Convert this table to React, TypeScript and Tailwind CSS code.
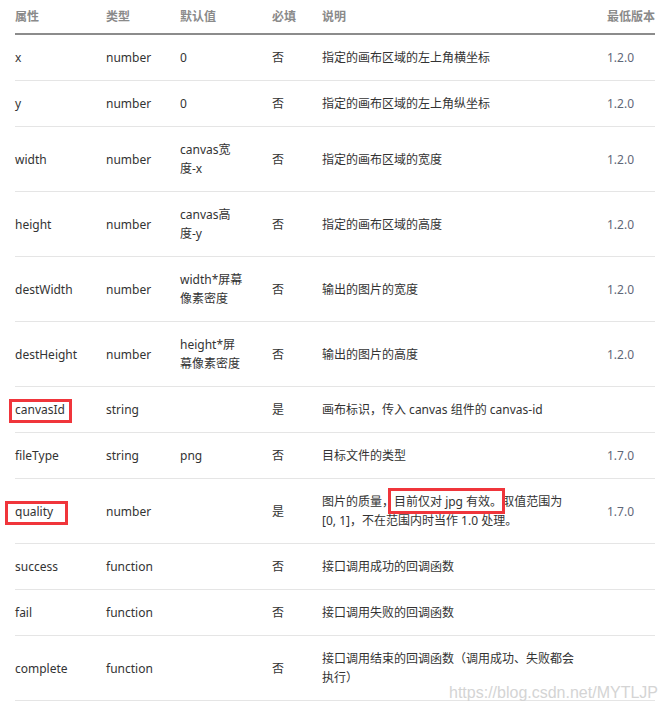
import React from "react";

type Row = {
  name: React.ReactNode;
  type: string;
  def?: React.ReactNode;
  required: string;
  desc: React.ReactNode;
  version?: string;
};

function Boxed({ children, className }: { children: React.ReactNode; className: string }) {
  return (
    <span className="relative inline-block">
      {children}
      <span className={`pointer-events-none absolute border-[3px] border-[#f0353b] ${className}`} />
    </span>
  );
}

const rows: Row[] = [
  { name: "x", type: "number", def: "0", required: "否", desc: "指定的画布区域的左上角横坐标", version: "1.2.0" },
  { name: "y", type: "number", def: "0", required: "否", desc: "指定的画布区域的左上角纵坐标", version: "1.2.0" },
  {
    name: "width",
    type: "number",
    def: (
      <>
        canvas宽
        <br />
        度-x
      </>
    ),
    required: "否",
    desc: "指定的画布区域的宽度",
    version: "1.2.0",
  },
  {
    name: "height",
    type: "number",
    def: (
      <>
        canvas高
        <br />
        度-y
      </>
    ),
    required: "否",
    desc: "指定的画布区域的高度",
    version: "1.2.0",
  },
  {
    name: "destWidth",
    type: "number",
    def: (
      <>
        width*屏幕
        <br />
        像素密度
      </>
    ),
    required: "否",
    desc: "输出的图片的宽度",
    version: "1.2.0",
  },
  {
    name: "destHeight",
    type: "number",
    def: (
      <>
        height*屏
        <br />
        幕像素密度
      </>
    ),
    required: "否",
    desc: "输出的图片的高度",
    version: "1.2.0",
  },
  {
    name: <Boxed className="-left-[6px] -top-[1px] h-[24px] w-[63px]">canvasId</Boxed>,
    type: "string",
    required: "是",
    desc: "画布标识，传入 canvas 组件的 canvas-id",
  },
  { name: "fileType", type: "string", def: "png", required: "否", desc: "目标文件的类型", version: "1.7.0" },
  {
    name: <Boxed className="-left-[10px] -top-[1px] h-[24px] w-[63px]">quality</Boxed>,
    type: "number",
    required: "是",
    desc: (
      <>
        图片的质量，
        <Boxed className="-left-[6px] -right-[3px] -top-[4px] -bottom-[3px]">目前仅对 jpg 有效。</Boxed>
        取值范围为
        <br />
        [0, 1]，不在范围内时当作 1.0 处理。
      </>
    ),
    version: "1.7.0",
  },
  { name: "success", type: "function", required: "否", desc: "接口调用成功的回调函数" },
  { name: "fail", type: "function", required: "否", desc: "接口调用失败的回调函数" },
  {
    name: "complete",
    type: "function",
    required: "否",
    desc: (
      <>
        接口调用结束的回调函数（调用成功、失败都会
        <br />
        执行）
      </>
    ),
  },
];

const headers = ["属性", "类型", "默认值", "必填", "说明", "最低版本"];

export default function App() {
  return (
    <div
      className="relative h-[712px] w-[668px] overflow-hidden bg-white"
      style={{ fontFamily: '"Noto Sans", "Noto Sans CJK SC", sans-serif' }}
    >
      <table className="ml-[15px] w-[640px] table-fixed border-collapse text-left text-[12px] leading-[19px] text-[#333]">
        <colgroup>
          <col className="w-[91px]" />
          <col className="w-[74px]" />
          <col className="w-[92px]" />
          <col className="w-[50px]" />
          <col className="w-[285px]" />
          <col className="w-[48px]" />
        </colgroup>
        <thead>
          <tr className="border-b-2 border-[#8c8c8c]">
            {headers.map((h) => (
              <th key={h} className="whitespace-nowrap p-0 pb-[7px] pt-[7px] font-semibold text-[#8a8a8a]">
                {h}
              </th>
            ))}
          </tr>
        </thead>
        <tbody>
          {rows.map((r, i) => (
            <tr key={i} className="border-b border-[#e5e5e5]">
              <td className="whitespace-nowrap py-[13px] align-middle">{r.name}</td>
              <td className="whitespace-nowrap py-[13px] align-middle">{r.type}</td>
              <td className="whitespace-nowrap py-[13px] align-middle">{r.def}</td>
              <td className="whitespace-nowrap py-[13px] align-middle">{r.required}</td>
              <td className="whitespace-nowrap py-[13px] align-middle">{r.desc}</td>
              <td className="whitespace-nowrap py-[13px] align-middle text-[#5f6778]">{r.version}</td>
            </tr>
          ))}
        </tbody>
      </table>
      <span
        className="absolute right-[10px] top-[683px] text-[16px] leading-[20px] text-[#d4d4d4]"
        style={{ fontFamily: '"Liberation Sans", Arial, sans-serif' }}
      >
        https://blog.csdn.net/MYTLJP
      </span>
    </div>
  );
}
